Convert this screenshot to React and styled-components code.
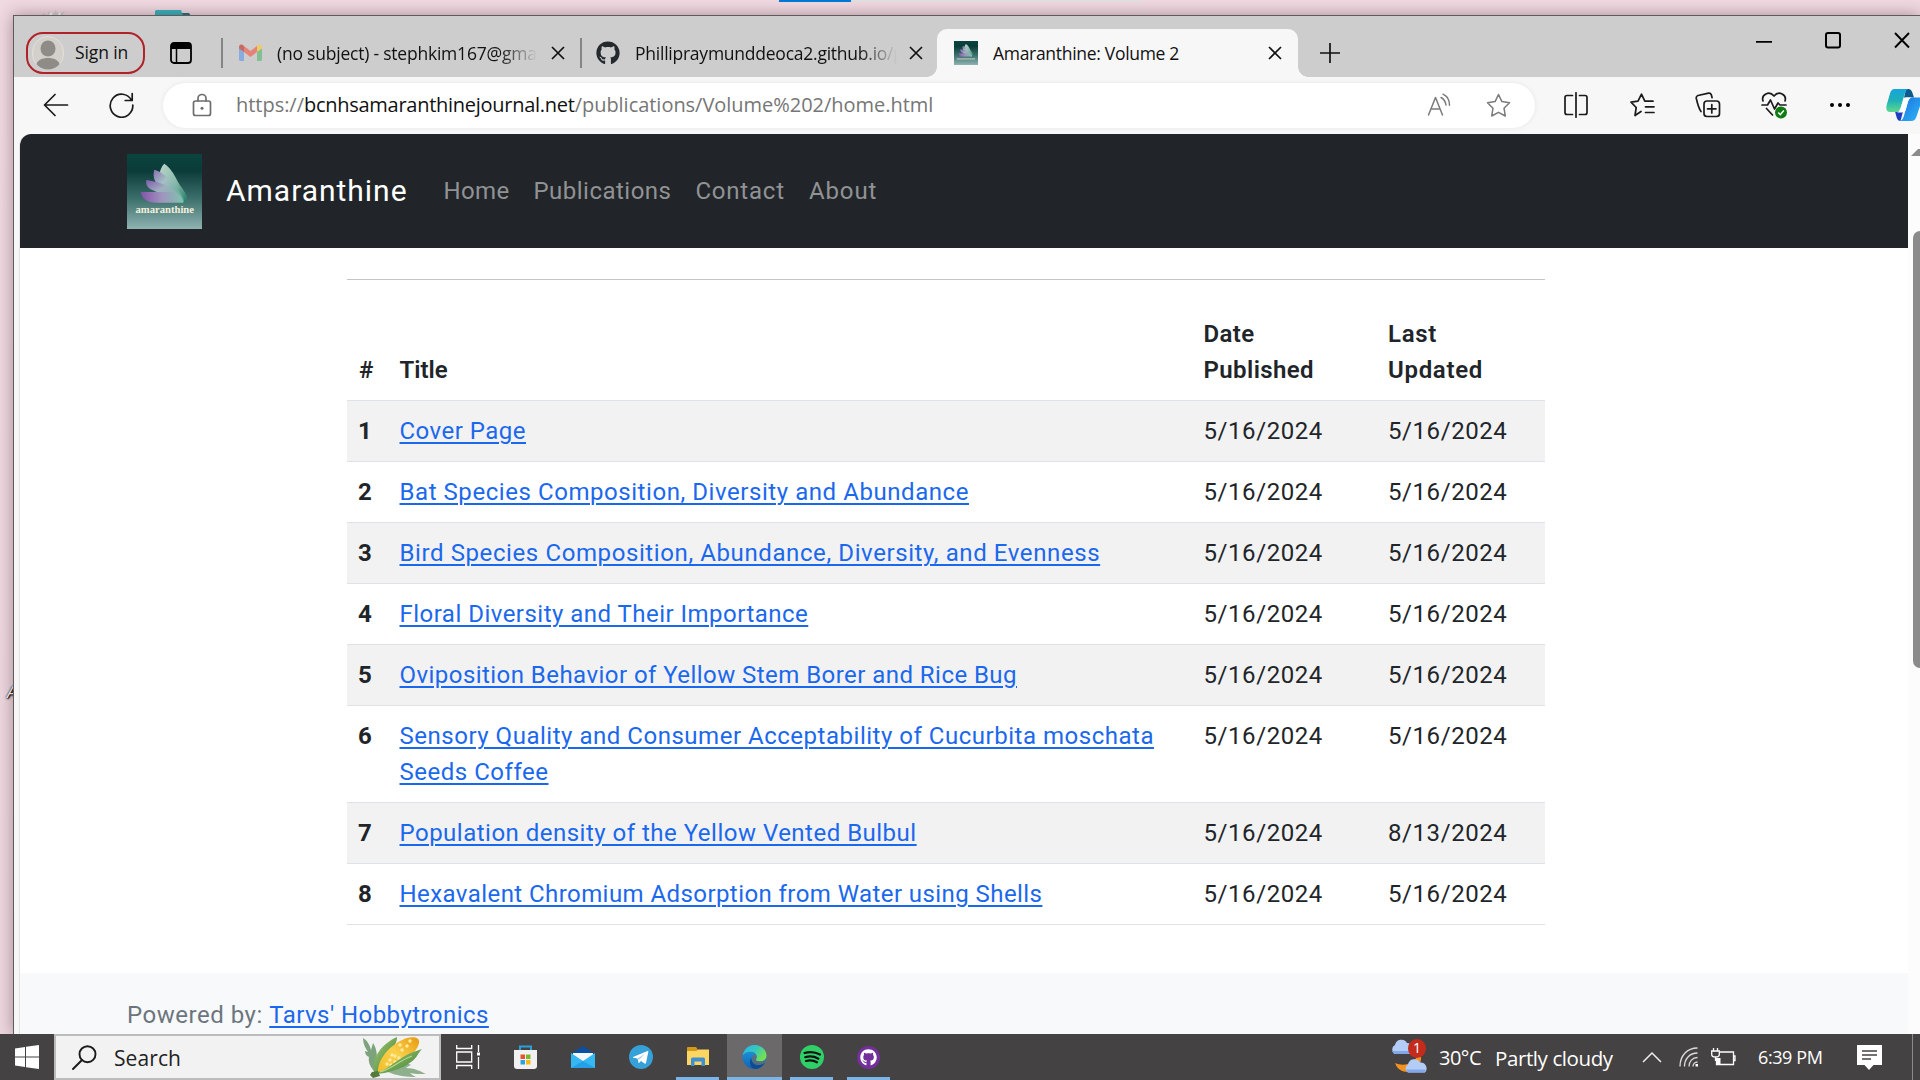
import React from 'react';
import styled, { createGlobalStyle, css } from 'styled-components';
import { FaGithub } from 'react-icons/fa';

const Global = createGlobalStyle`
  *, *::before, *::after { box-sizing: border-box; }
  body { margin: 0; overflow: hidden; background: #efd8e0; }
  svg { display: block; flex: none; }
`;

const ui = css`font-family: "Open Sans", "Noto Sans", sans-serif;`;
const web = css`font-family: Roboto, "Liberation Sans", sans-serif;`;

/* ---------- desktop ---------- */
const Desktop = styled.div`
  position: relative;
  width: 1920px;
  height: 1080px;
  overflow: hidden;
  display: flex;
  flex-direction: column;
  background: linear-gradient(#f0d9e1, #edd7df);
`;
const Behind = styled.div`
  position: absolute;
  left: ${p => p.$x}px;
  top: ${p => p.$y}px;
`;
const TopStrip = styled.div`
  display: flex;
  width: 363px;
  height: 2px;
  background: #e2e0e2;
  &::before { content: ''; width: 72px; background: #0078d7; }
`;
const IconLabel = styled.span`
  ${ui}
  font-size: 17px;
  font-style: italic;
  line-height: 20px;
  color: #fff;
  text-shadow: 1px 1px 2px #000, 0 0 2px #000, 1px 0 1px #000;
`;

/* ---------- browser window ---------- */
const Window = styled.div`
  position: relative;
  flex: 1;
  min-height: 0;
  margin: 15px 0 0 13px;
  display: flex;
  flex-direction: column;
  border-left: 1px solid #5f5b5d;
  border-top: 1px solid #5f5b5d;
  background: #f7f7f7;
  box-shadow: 0 0 15px rgba(60, 30, 40, 0.42);
`;
const TitleBar = styled.div`
  ${ui}
  display: flex;
  align-items: flex-start;
  height: 61px;
  padding-left: 12px;
  background: #cdcdcd;
  color: #111;
`;
const TitleItem = styled.div`
  display: flex;
  align-items: center;
  height: 41px;
  margin-top: 16px;
  margin-left: ${p => p.$ml || 0}px;
`;
const SignIn = styled.div`
  display: flex;
  align-items: center;
  gap: 11px;
  width: 119px;
  height: 42px;
  margin-top: 16px;
  padding-left: 4px;
  border: 2px solid #b02228;
  border-radius: 17px;
  font-size: 17.5px;
  letter-spacing: -0.1px;
  line-height: 34px;
`;
const SignInText = styled.span`
  padding-bottom: 2px;
`;
const Divider = styled.div`
  width: 2px;
  height: 30px;
  background: #858585;
`;
const TabTitle = styled.span`
  width: ${p => p.$w}px;
  overflow: hidden;
  white-space: nowrap;
  font-size: 17.5px;
  line-height: 28px;
  letter-spacing: ${p => p.$ls}px;
  ${p => p.$fade && css`mask-image: linear-gradient(90deg, #000 calc(100% - 38px), transparent);`}
`;
const ActiveTab = styled.div`
  position: relative;
  display: flex;
  align-items: center;
  width: 361px;
  height: 48px;
  margin-top: 13px;
  margin-left: 14px;
  padding: 0 16px 1px 17px;
  border-radius: 10px 10px 0 0;
  background: #f7f7f7;
  &::before, &::after {
    content: '';
    position: absolute;
    bottom: 0;
    width: 10px;
    height: 10px;
  }
  &::before { left: -10px; background: radial-gradient(circle at 0 0, #cdcdcd 9.5px, #f7f7f7 10px); }
  &::after { right: -10px; background: radial-gradient(circle at 100% 0, #cdcdcd 9.5px, #f7f7f7 10px); }
`;
const ActiveTitle = styled(TabTitle)`
  flex: 1;
  margin-left: 15px;
`;

const Toolbar = styled.div`
  ${ui}
  display: flex;
  align-items: center;
  height: 57px;
  padding: 0 0 1px 29px;
  background: #f7f7f7;
`;
const Address = styled.div`
  display: flex;
  align-items: center;
  width: 1372px;
  height: 45px;
  margin: 0 28px 0 29px;
  padding: 0 24px 0 29px;
  border-radius: 23px;
  background: #fff;
  box-shadow: 0 0 5px rgba(0, 0, 0, 0.07);
`;
const Url = styled.div`
  flex: 1;
  margin-left: 24px;
  font-size: 20px;
  line-height: 30px;
  white-space: nowrap;
  color: #767676;
  letter-spacing: -0.03px;
`;
const Host = styled.span`
  color: #111;
  letter-spacing: -0.27px;
`;
const ToolIcons = styled.div`
  display: flex;
  align-items: center;
  gap: ${p => p.$gap || 40}px;
`;

const Viewport = styled.div`
  flex: 1;
  min-height: 0;
  display: flex;
  margin-left: 5px;
  border-left: 1px solid #e3e3e3;
  border-top-left-radius: 12px;
  background: #fff;
  overflow: hidden;
`;
const Page = styled.div`
  ${web}
  width: 1888px;
  display: flex;
  flex-direction: column;
  font-size: 24px;
  line-height: 36px;
  color: #212529;
`;
const Scrollbar = styled.div`
  flex: 1;
  display: flex;
  flex-direction: column;
  background: #fcfcfc;
  padding: 15px 0 0 3px;
  overflow: hidden;
`;
const Thumb = styled.div`
  width: 14px;
  height: 437px;
  margin: 75px 0 0 2px;
  border-radius: 7px;
  background: #8b8b8b;
`;

/* ---------- site ---------- */
const Navbar = styled.nav`
  display: flex;
  align-items: center;
  height: 114px;
  padding-left: 107px;
  background: #212529;
`;
const Brand = styled.a`
  width: 217.5px;
  margin-left: 24px;
  font-size: 30px;
  letter-spacing: 0.98px;
  color: #fff;
`;
const NavLink = styled.a`
  margin-right: 24px;
  color: #909294;
  letter-spacing: ${p => p.$ls}px;
`;
const Main = styled.main`
  width: 1198px;
  margin-left: 327px;
  padding-top: 31px;
  height: 725px;
`;
const Rule = styled.hr`
  height: 1px;
  margin: 0 0 24px;
  border: 0;
  background: #c4c5c7;
`;
const Table = styled.table`
  width: 100%;
  table-layout: fixed;
  border-collapse: separate;
  border-spacing: 0;
`;
const Col = styled.col`width: ${p => p.$w}px;`;
const Th = styled.th`
  padding: 12px;
  border-bottom: 1px solid #dee2e6;
  text-align: left;
  vertical-align: bottom;
  font-weight: 600;
  letter-spacing: ${p => p.$ls || 0}px;
`;
const Row = styled.tr`
  background: ${p => (p.$odd ? '#f2f2f2' : '#fff')};
`;
const Td = styled.td`
  padding: 12px;
  border-bottom: 1px solid #dee2e6;
  vertical-align: top;
  letter-spacing: 0.58px;
`;
const Num = styled(Td)`
  padding-left: 11px;
  font-weight: 700;
`;
const Link = styled.a`
  color: #1a68ee;
  text-decoration: underline;
  text-decoration-thickness: 2px;
  text-underline-offset: 3px;
  letter-spacing: ${p => p.$ls}px;
`;
const Footer = styled.footer`
  flex: 1;
  padding: 24px 0 0 107px;
  background: #f8f9fa;
  color: #6c757d;
  letter-spacing: 0.52px;
  white-space: nowrap;
`;

/* ---------- taskbar ---------- */
const Taskbar = styled.div`
  ${ui}
  position: relative;
  display: flex;
  height: 46px;
  background: #444242;
  color: #fff;
`;
const Start = styled.div`
  display: flex;
  align-items: center;
  width: 54px;
  padding-left: 15px;
`;
const SearchBox = styled.div`
  display: flex;
  align-items: center;
  width: 387px;
  height: 46px;
  padding-left: 16px;
  border: 2px solid #bdbcbc;
  background: #f2f2f2;
  color: #222;
  font-size: 21px;
`;
const SearchText = styled.span`
  width: 248px;
  margin-left: 17px;
  padding-top: 2px;
  line-height: 28px;
  letter-spacing: 0.1px;
`;
const TaskButton = styled.div`
  display: flex;
  align-items: center;
  justify-content: center;
  width: ${p => p.$w || 43}px;
  margin-left: ${p => p.$ml}px;
  background: ${p => (p.$active ? '#6b6969' : 'transparent')};
  border-bottom: ${p => (p.$open ? '3px solid #7cb4e8' : '0')};
  padding-top: ${p => (p.$open ? 3 : 0)}px;
`;
const Tray = styled.div`
  flex: 1;
  display: flex;
  align-items: center;
  padding-left: 500px;
  white-space: nowrap;
`;
const WeatherIcon = styled.div`
  position: relative;
  width: 37px;
  height: 46px;
`;
const Badge = styled.span`
  position: absolute;
  left: 18px;
  top: 5px;
  width: 18px;
  height: 19px;
  border-radius: 50%;
  background: #c42b1c;
  font-size: 14px;
  line-height: 18px;
  text-align: center;
`;
const TrayText = styled.span`
  width: ${p => p.$w}px;
  margin-left: ${p => p.$ml}px;
  padding-top: ${p => p.$pt || 0}px;
  font-size: ${p => p.$size}px;
  line-height: 28px;
  letter-spacing: ${p => p.$ls}px;
`;
const Spaced = styled.div`
  margin-left: ${p => p.$ml}px;
`;
const ShowDesktop = styled.div`
  width: 1px;
  height: 46px;
  margin-left: 30px;
  background: #8c8b8b;
`;

/* ---------- drawings ---------- */
const line = { fill: 'none', stroke: '#1b1b1b', strokeWidth: 1.7, strokeLinecap: 'round', strokeLinejoin: 'round' };

const Logo = ({ size, small }) => (
  <svg width={size} height={size} viewBox="0 0 75 75">
    <defs>
      <linearGradient id="lbg" x1="0" y1="0" x2="0" y2="1">
        <stop offset="0" stopColor="#0b443f" /><stop offset=".22" stopColor="#0a3b38" />
        <stop offset=".6" stopColor="#3d706c" /><stop offset="1" stopColor="#8fb3b1" />
      </linearGradient>
      <linearGradient id="p1" x1="0" y1="0" x2="1" y2="0"><stop offset="0" stopColor="#8452a8" /><stop offset=".5" stopColor="#9f94bd" /><stop offset="1" stopColor="#7ec4ad" /></linearGradient>
      <linearGradient id="p2" x1="0" y1="0" x2="1" y2="1"><stop offset="0" stopColor="#8259ab" /><stop offset=".4" stopColor="#9fb0c0" /><stop offset="1" stopColor="#6bb59c" /></linearGradient>
      <linearGradient id="p3" x1="0" y1="0" x2="1" y2="1"><stop offset="0" stopColor="#8a6fb3" /><stop offset=".35" stopColor="#a5c0c4" /><stop offset="1" stopColor="#4fa18c" /></linearGradient>
      <linearGradient id="p4" x1="0" y1="0" x2="1" y2="1"><stop offset="0" stopColor="#bcd5cd" /><stop offset=".55" stopColor="#86b8a8" /><stop offset="1" stopColor="#1f7a69" /></linearGradient>
    </defs>
    <rect width="75" height="75" fill="url(#lbg)" />
    <path d="M37.300 9.700C43 13 47 20 51 28c4 7 9 11 9 17 0 2-1.500 4-4 4C50 38 37 32 33 24c-1-6 1-11 4.300-14.300Z" fill="url(#p4)" />
    <path d="M27.300 15.700C33 17 41 23 47 31c5 6 10 11 10 17-9-6-24-14-29-21-1.800-4-1.600-8-.700-11.300Z" fill="url(#p3)" />
    <path d="M19.300 26c8 1 19 4 26 9 7 4 12 9 11 14-9-5-23-9-31-13-5-2-7-6-6-10Z" fill="url(#p2)" />
    <path d="M13.700 38H42c8 0 13 4 14 10.700H28c-8 0-13-4-14.300-10.700Z" fill="url(#p1)" />
    {small
      ? <path d="M9 56h57" stroke="#c9d3c6" strokeWidth="5" opacity=".6" />
      : <text x="8.500" y="58.500" textLength="58.500" lengthAdjust="spacingAndGlyphs" fontFamily="Liberation Serif, serif" fontWeight="700" fontSize="11" fill="#f3f1de">amaranthine</text>}
  </svg>
);
const Avatar = () => (
  <svg width="32" height="34" viewBox="0 0 32 34">
    <ellipse cx="16" cy="17" rx="15.500" ry="16.500" fill="#d3cfcb" stroke="#e3e0dc" />
    <ellipse cx="16" cy="12.500" rx="7.500" ry="8" fill="#8f8c88" />
    <path d="M4.500 28C6 24 10 22 16 22s10 2 11.500 6C24.500 32 20 33.500 16 33.500S7.500 32 4.500 28Z" fill="#8f8c88" />
  </svg>
);
const TabsIcon = () => (
  <svg width="22" height="22" viewBox="0 0 22 22">
    <rect x="1" y="1" width="20" height="20" rx="3" fill="none" stroke="#000" strokeWidth="1.800" />
    <path d="M1 7V4a3 3 0 0 1 3-3h14a3 3 0 0 1 3 3v3Z" fill="#000" /><path d="M6.500 6v15" stroke="#000" strokeWidth="1.500" />
  </svg>
);
const Gmail = () => (
  <svg width="23" height="17" viewBox="0 0 23 17">
    <path d="M0 3v12.500Q0 17 1.500 17H5V6Z" fill="#87acdf" /><path d="M23 3v12.500q0 1.500-1.500 1.500H18V6Z" fill="#82c093" />
    <path d="M18 2v6l5-3.500V3c0-3-3-3.500-5-1Z" fill="#eccb68" /><path d="M5 2v6L0 4.500V3c0-3 3-3.500 5-1Z" fill="#c66a64" />
    <path d="M5 2l6.500 5L18 2v6l-6.500 5L5 8Z" fill="#e58379" />
  </svg>
);
const Cross = ({ s = 14, w = 1.7 }) => (
  <svg width={s} height={s} viewBox="0 0 14 14"><path d="M1 1l12 12M13 1L1 13" stroke="#111" strokeWidth={w} fill="none" /></svg>
);
const star = 'M12.500 1.500l3.400 7.100 7.600 1.100-5.500 5.500 1.300 7.800-6.800-3.700L5.700 23 7 15.200 1.500 9.700l7.600-1.100Z';
const Copilot = () => (
  <svg width="34" height="34" viewBox="0 0 34 34">
    <defs>
      <linearGradient id="c1" x1="0" y1="0" x2="0" y2="1"><stop offset="0" stopColor="#15a5dc" /><stop offset=".5" stopColor="#1fb0b8" /><stop offset="1" stopColor="#5fd98d" /></linearGradient>
      <linearGradient id="c2" x1="0" y1="0" x2="1" y2="1"><stop offset="0" stopColor="#1d6fe0" /><stop offset="1" stopColor="#2ab4f5" /></linearGradient>
    </defs>
    <path d="M20 1h2.500c2 0 3 1.300 3.800 3.500L28 9.500H18Z" fill="#0b5a8e" />
    <path d="M9 23.500h8L14.500 33c-2 0-3.300-1.500-4-4Z" fill="#1b3fc0" />
    <path d="M8.500 1H23c-2.500 0-3.500 2-4.500 5.500L15 18.500C14 22 13 24 9.500 24H4c-4 0-4.200-4-3.200-7.500L4 5.500C5 2.500 6 1 8.500 1Z" fill="url(#c1)" />
    <path d="M34 9.500h-7.500c-3 0-4 2-5 5.500L18.500 26c-1.200 4.500-2.500 7-5.500 7H25c3 0 4.500-1.500 5.500-4.500L34 18Z" fill="url(#c2)" />
    <path d="M20.500 9.500H26c-2.300.3-3.300 2-4.200 5l-1.800 6.500c-.8 2.600-2 3.500-4 3.500h-5c2.300-.5 3.300-2.500 4-5l1.800-6.500c.6-2 1.700-3.500 3.700-3.500Z" fill="#fff" />
  </svg>
);
const Corn = () => (
  <svg width="66" height="42" viewBox="0 0 66 42">
    <defs>
      <linearGradient id="k" x1="0" y1="1" x2="1" y2="0"><stop offset="0" stopColor="#f3bd2c" /><stop offset=".5" stopColor="#f9d04a" /><stop offset="1" stopColor="#e79a10" /></linearGradient>
      <linearGradient id="lf" x1="0" y1="0" x2="1" y2="1"><stop offset="0" stopColor="#a5cc74" /><stop offset="1" stopColor="#3f8038" /></linearGradient>
    </defs>
    <path d="M1 2c5 3 7 8 8 12l2-7c4 6 4 12 4 18l-3 10C8 30 6 26 7 21c-3-1-4-4-4-6l3 1C3 12 1 7 1 2Z" fill="#7da37c" />
    <path d="M27 33c8-5 16-7 22-4-2 1-4 2-5 3 8 0 14 3 20 6-8 0-12 0-16-1 2 2 4 3 6 4-8 0-20-1-28-5Z" fill="#8fb08d" />
    <path d="M12 36C10 20 20 8 35 1c0 6-3 10-8 16S18 30 18 37Z" fill="url(#lf)" />
    <path d="M16 33c2-14 16-27 29-31 6-1.500 13-1 12 5-2 12-24 25-41 29Z" fill="url(#k)" />
    {[[28, 24], [33, 20], [30, 19], [37, 22], [25, 28], [33, 26], [40, 14], [45, 10], [38, 9], [48, 5], [29, 29]].map(([x, y]) => <circle key={x + '-' + y} cx={x} cy={y} r="1.700" fill="#ffeaa0" />)}
    <path d="M14 37C28 34 35 20 60 13c-4 4-5 9-11 13-9 7-22 11-35 12Z" fill="url(#lf)" />
    <path d="M10 36l6-1 2 5-7 2-3-3Z" fill="#55783b" />
    <path d="M18 36c12-3 20-12 32-16" stroke="#b7d98b" strokeWidth="1.200" fill="none" />
  </svg>
);
const Weather = () => (
  <svg width="37" height="46" viewBox="0 0 37 46">
    <path d="M31 22c1 9-5 16-13 16-6 0-11-3-13-9 9 4 20 1 23-9Z" fill="#f3941f" />
    <path d="M5 20a5 5 0 0 1 0-9 6.500 6.500 0 0 1 12-2 6 6 0 0 1 3 11Z" fill="#b4cdf6" /><path d="M2 17h19l-2 3H4Z" fill="#83a8ea" />
    <path d="M18 38.500a4.500 4.500 0 0 1 0-8 6.500 6.500 0 0 1 12-2 6 6 0 0 1 5 10Z" fill="#b4cdf6" /><path d="M15.500 35.500H36l-1.500 3H18Z" fill="#83a8ea" />
  </svg>
);

const papers = [
  ['Cover Page', 0.48], ['Bat Species Composition, Diversity and Abundance', 0.56],
  ['Bird Species Composition, Abundance, Diversity, and Evenness', 0.6], ['Floral Diversity and Their Importance', 0.48],
  ['Oviposition Behavior of Yellow Stem Borer and Rice Bug', 0.45], ['Sensory Quality and Consumer Acceptability of Cucurbita moschata Seeds Coffee', 0.52],
  ['Population density of the Yellow Vented Bulbul', 0.49, '8/13/2024'], ['Hexavalent Chromium Adsorption from Water using Shells', 0.43],
];

export default function App() {
  return (
    <Desktop>
      <Global />
      <Behind $x={779} $y={0}><TopStrip /></Behind>
      <Behind $x={40} $y={10}>
        <svg width="26" height="6"><path d="M0 6l4-3 3 3 2-5 4 4 2-5 4 4 6-3-3 5Z" fill="#d3cfd2" /><path d="M8 6l3-4 2 4ZM17 6l3-4 1 4Z" fill="#fff" /></svg>
      </Behind>
      <Behind $x={155} $y={10}>
        <svg width="36" height="6"><path d="M26 3h8l2 3H20Z" fill="#1d7480" /><path d="M1 0h25l2 6H0V1Z" fill="#35b5be" /></svg>
      </Behind>
      <Behind $x={7} $y={682}><IconLabel>A</IconLabel></Behind>
      <Window>
        <TitleBar>
          <SignIn><Avatar /><SignInText>Sign in</SignInText></SignIn>
          <TitleItem $ml={25}><TabsIcon /></TitleItem>
          <TitleItem $ml={29}><Divider /></TitleItem>
          <TitleItem $ml={16}><Gmail /></TitleItem>
          <TitleItem $ml={15}><TabTitle $w={260} $ls={-0.22} $fade>(no subject) - stephkim167@gmail.com</TabTitle></TitleItem>
          <TitleItem $ml={14}><Cross /></TitleItem>
          <TitleItem $ml={15}><Divider /></TitleItem>
          <TitleItem $ml={14}><FaGithub size={24} color="#24292e" /></TitleItem>
          <TitleItem $ml={15}><TabTitle $w={262} $ls={-0.24} $fade>Phillipraymunddeoca2.github.io/publications</TabTitle></TitleItem>
          <TitleItem $ml={12}><Cross /></TitleItem>
          <ActiveTab>
            <Logo size={24} small />
            <ActiveTitle $ls={-0.3}>Amaranthine: Volume 2</ActiveTitle>
            <Cross />
          </ActiveTab>
          <TitleItem $ml={21}>
            <svg width="22" height="22" viewBox="0 0 22 22"><path d="M11 1v20M1 11h20" stroke="#111" strokeWidth="1.700" /></svg>
          </TitleItem>
          <TitleItem $ml={415}>
            <svg width="16" height="24" viewBox="0 0 16 24"><path d="M0 .5h16" stroke="#000" strokeWidth="2.500" /></svg>
          </TitleItem>
          <TitleItem $ml={53}>
            <svg width="16" height="42" viewBox="0 0 16 42"><rect x="1" y="1" width="14" height="14.500" rx="2" fill="none" stroke="#000" strokeWidth="2" /></svg>
          </TitleItem>
          <TitleItem $ml={53}>
            <svg width="16" height="42" viewBox="0 0 16 42"><path d="M1 1l14 14.500M15 1L1 15.500" stroke="#000" strokeWidth="1.900" /></svg>
          </TitleItem>
        </TitleBar>

        <Toolbar>
          <svg width="26" height="24" viewBox="0 0 26 24"><path d="M24.500 12H2M12 1.500L1.500 12 12 22.500" {...line} /></svg>
          <Spaced $ml={40}>
            <svg width="25" height="26" viewBox="0 0 25 26"><path d="M22.500 8.300A11.300 11.500 0 1 0 23.800 13M23.200 1.500v7h-7" {...line} /></svg>
          </Spaced>
          <Address>
            <svg width="20" height="24" viewBox="0 0 20 24"><g {...line} stroke="#6d6d6d"><rect x="1.500" y="8" width="17" height="14.500" rx="2" /><path d="M6 8V5.500a4 4 0 0 1 8 0V8" /></g><circle cx="10" cy="15.200" r="1.500" fill="#6d6d6d" /></svg>
            <Url>https://<Host>bcnhsamaranthinejournal.net</Host>/publications/Volume%202/home.html</Url>
            <ToolIcons $gap={35}>
              <svg width="24" height="24" viewBox="0 0 24 24"><g {...line} stroke="#7b7b7b" strokeWidth="1.500"><path d="M1.500 22L8.500 4.500 15.500 22M4 16h9M14 4.500c3 1.500 4.500 4 5 7.500M16 1.200c4 2 6.500 6 6.500 11" /></g></svg>
              <svg width="25" height="25" viewBox="0 0 25 25"><path d={star} {...line} stroke="#7b7b7b" strokeWidth="1.500" /></svg>
            </ToolIcons>
          </Address>
          <ToolIcons>
            <svg width="26" height="26" viewBox="0 0 26 26"><path d="M9.500 3.500H4a2 2 0 0 0-2 2v15a2 2 0 0 0 2 2h5.500M16.500 3.500H22a2 2 0 0 1 2 2v15a2 2 0 0 1-2 2h-5.500M13 .8v24.400" {...line} /></svg>
            <svg width="26" height="26" viewBox="0 0 26 26"><path d="M12 19.500l-6 4 1.200-8L2 10.200l7-1 3.500-7 3.300 7H24M16.500 14.800H25M16.500 20.500H25" {...line} /></svg>
            <svg width="26" height="26" viewBox="0 0 26 26"><rect x="9" y="9" width="15.500" height="15.500" rx="3" {...line} /><path d="M16.800 12.500v8.500M12.500 16.800H21M6 19.500C4 17 2 9.500 1.300 6.500 1 5 1.500 4 3 3.500l10.500-2.300c1.500-.2 2.300.3 2.800 1.500l.8 3" {...line} /></svg>
            <svg width="26" height="28" viewBox="0 0 26 28"><path d="M2 10C0 4 8-1 13 5c5-6 13-1 11 5M1 14h5.500l3-5 4 9 3.500-6 2 2h6M5.500 17.500l6 6.500" {...line} /><circle cx="20" cy="21.500" r="6" fill="#0f7b12" /><path d="M17.300 21.500l2 2.200 3.500-4.200" stroke="#fff" strokeWidth="1.500" fill="none" /></svg>
            <svg width="26" height="6" viewBox="0 0 26 6"><circle cx="5" cy="3" r="2" /><circle cx="13" cy="3" r="2" /><circle cx="21" cy="3" r="2" /></svg>
            <Spaced $ml={-7}><Copilot /></Spaced>
          </ToolIcons>
        </Toolbar>

        <Viewport>
          <Page>
            <Navbar>
              <Logo size={75} />
              <Brand>Amaranthine</Brand>
              <NavLink $ls={0.35}>Home</NavLink>
              <NavLink $ls={0.48}>Publications</NavLink>
              <NavLink $ls={0.8}>Contact</NavLink>
              <NavLink $ls={0.9}>About</NavLink>
            </Navbar>
            <Main>
              <Rule />
              <Table>
                <colgroup><Col $w={40.5} /><Col $w={804} /><Col $w={184.5} /><Col /></colgroup>
                <thead>
                  <tr><Th>#</Th><Th>Title</Th><Th $ls={0.4}>Date<br />Published</Th><Th $ls={0.7}>Last<br />Updated</Th></tr>
                </thead>
                <tbody>
                  {papers.map(([title, ls, updated = '5/16/2024'], i) => (
                    <Row key={title} $odd={i % 2 === 0}>
                      <Num>{i + 1}</Num>
                      <Td><Link $ls={ls}>{title}</Link></Td>
                      <Td>5/16/2024</Td>
                      <Td>{updated}</Td>
                    </Row>
                  ))}
                </tbody>
              </Table>
            </Main>
            <Footer>Powered by: <Link $ls={0.45}>Tarvs' Hobbytronics</Link></Footer>
          </Page>
          <Scrollbar>
            <svg width="18" height="7" viewBox="0 0 18 7"><path d="M0 7L8.500-1.500 17 7Z" fill="#8b8b8b" /></svg>
            <Thumb />
          </Scrollbar>
        </Viewport>
      </Window>

      <Taskbar>
        <Start>
          <svg width="24" height="24" viewBox="0 0 24 24"><path d="M0 3.400L10 2v9.500H0ZM11 1.800L24 0v11.500H11ZM0 12.500h10V22L0 20.600ZM11 12.500h13V24l-13-1.800Z" fill="#fff" /></svg>
        </Start>
        <SearchBox>
          <svg width="25" height="25" viewBox="0 0 25 25"><circle cx="15.500" cy="9.200" r="8" {...line} strokeWidth="1.900" /><path d="M10 15L1 24" {...line} strokeWidth="1.900" /></svg>
          <SearchText>Search</SearchText>
          <Corn />
        </SearchBox>
        <TaskButton $ml={5}>
          <svg width="24" height="24" viewBox="0 0 24 24"><path d="M.7 0v3.500h15V0M.7 7h15v10H.7ZM.7 24v-3.500h15V24M22.500 0v7M22.500 12v12" fill="none" stroke="#fff" strokeWidth="1.300" /><rect x="21" y="7.500" width="3" height="3" fill="#fff" /></svg>
        </TaskButton>
        <TaskButton $ml={15}>
          <svg width="23" height="24" viewBox="0 0 23 24"><path d="M6 6V1.500h11V6" fill="none" stroke="#29a0dc" strokeWidth="2" /><path d="M0 5h23v16q0 3-3 3H3q-3 0-3-3Z" fill="#f1f1f1" /><path d="M6.500 9.500h4.500v4.500H6.500Z" fill="#e8532a" /><path d="M12 9.500h4.500v4.500H12Z" fill="#7cb82f" /><path d="M6.500 15h4.500v4.500H6.500Z" fill="#2ba2e0" /><path d="M12 15h4.500v4.500H12Z" fill="#f5b81f" /></svg>
        </TaskButton>
        <TaskButton $ml={14}>
          <svg width="24" height="23" viewBox="0 0 24 23"><path d="M0 8L12 0l12 8v3H0Z" fill="#0a50a0" /><path d="M2 7h20v10H2Z" fill="#f4f8fb" /><path d="M0 7l12 8L24 7v15H0Z" fill="#35b8f1" /><path d="M12 15l12 7H0Z" fill="#1a8bdc" opacity=".55" /></svg>
        </TaskButton>
        <TaskButton $ml={15}>
          <svg width="24" height="24" viewBox="0 0 24 24"><circle cx="12" cy="12" r="12" fill="#36a0d8" /><path d="M4 12L18.500 6c.7-.2 1 .2.800 1l-2.300 11c-.2.800-.7 1-1.400.6l-3.600-2.700-1.700 1.800c-.5.400-.8.200-.9-.4L8.600 13.600 4.300 12.700c-.6-.2-.6-.5-.3-.7Z" fill="#fff" /><path d="M8.600 13.600L16 8.700l-5.800 6Z" fill="#a9cfe5" /></svg>
        </TaskButton>
        <TaskButton $ml={14} $open>
          <svg width="22" height="20" viewBox="0 0 22 20"><path d="M0 1q0-1 1-1h8l2 3v5H0Z" fill="#d39a17" /><path d="M0 4h9.500L11 2.500H22V18H0Z" fill="#fbd663" /><path d="M4 19v-7q0-1.500 1.500-1.500h11Q18 10.500 18 12v7h-3.500v-4.500h-7V19Z" fill="#3f8fd1" /></svg>
        </TaskButton>
        <TaskButton $ml={8} $w={55} $open $active>
          <svg width="25" height="24" viewBox="0 0 25 24">
            <defs>
              <linearGradient id="e1" x1="0" y1="0" x2="1" y2=".6"><stop offset="0" stopColor="#2bb4e6" /><stop offset=".5" stopColor="#36c6c0" /><stop offset="1" stopColor="#76e24b" /></linearGradient>
              <linearGradient id="e2" x1="0" y1="0" x2="0" y2="1"><stop offset="0" stopColor="#1f9fe3" /><stop offset="1" stopColor="#1263b5" /></linearGradient>
            </defs>
            <circle cx="12.500" cy="12" r="12" fill="url(#e2)" />
            <path d="M1 10C2 4 7 0 12.500 0c7 0 12 5 12 10.500 0 4-3 6-6.500 6-3 0-4.500-1-4-2.200 1.500-2 1-6-3-7.300C7 6 3 7 1 10Z" fill="url(#e1)" />
            <path d="M9.500 12.500C9 17 12 20 16 20c3 0 5-1 6.800-2.300C20.500 22 17 24 13 24 8 23 6.500 17 9.500 12.500Z" fill="#0d4c95" />
            <path d="M14 14.300c-.5 1.200 1 2.200 4 2.200 2.500 0 4.500-1 5.600-2.500-.1 1.500-.4 2.500-.8 3.700C21 19 19 20 16 20c-4 0-7-3.500-6-8 1-2.500 3-3 4-2 1 1.500.8 3 0 4.300Z" fill="#6b6969" opacity=".75" />
          </svg>
        </TaskButton>
        <TaskButton $ml={8} $open>
          <svg width="24" height="24" viewBox="0 0 24 24"><circle cx="12" cy="12" r="12" fill="#2ed168" /><path d="M4.500 8c5-1.500 11-1 15.500 1.500M5.200 12.200c4.500-1.300 9.300-.8 13.200 1.500M6 16c3.800-1 7.600-.6 11 1.300" fill="none" stroke="#111" strokeWidth="2.200" strokeLinecap="round" /></svg>
        </TaskButton>
        <TaskButton $ml={14} $open>
          <svg width="23" height="23" viewBox="0 0 23 23"><circle cx="11.500" cy="11.500" r="11.500" fill="#74309a" /><g transform="translate(3 3)"><FaGithub size={17} color="#fff" /></g></svg>
        </TaskButton>
        <Tray>
          <WeatherIcon><Weather /><Badge>1</Badge></WeatherIcon>
          <TrayText $ml={12} $w={56} $size={20} $ls={-0.5} $pt={2}>30°C</TrayText>
          <TrayText $ml={0} $w={118} $size={20.5} $ls={-0.4} $pt={2}>Partly cloudy</TrayText>
          <Spaced $ml={29}><svg width="20" height="12" viewBox="0 0 20 12"><path d="M1 11L10 2l9 9" fill="none" stroke="#eee" strokeWidth="1.500" /></svg></Spaced>
          <Spaced $ml={17}>
            <svg width="20" height="20" viewBox="0 0 20 20"><g fill="none" stroke="#ddd" strokeWidth="1.300"><path d="M1 19.500C1 9 8 1 18.500 1M5.500 19.500C5.500 12 10.500 6 18.500 6M10 19.500c0-5 3.500-9 8.500-9M14 19.500c0-2.500 2-4.500 4.500-4.500" /></g><rect x="16.500" y="17" width="2.500" height="2.500" fill="#fff" /></svg>
          </Spaced>
          <Spaced $ml={12}>
            <svg width="25" height="18" viewBox="0 0 25 18"><g fill="none" stroke="#fff" strokeWidth="1.300"><path d="M9 4h13.500v12.500h-17V10M22.500 8h1.500v4.500h-1.500M2.500 0v3M6.500 0v3M.7 3h7.600v3.500q0 2.500-3.800 2.500T.7 6.500ZM4.500 9v4" /></g><path d="M6 10h3.500v6H6Z" fill="#fff" /></svg>
          </Spaced>
          <TrayText $ml={22} $w={66} $size={18} $ls={-0.4}>6:39 PM</TrayText>
          <Spaced $ml={33}>
            <svg width="25" height="25" viewBox="0 0 25 25"><path d="M0 0h25v20h-8.500L12 25l-4.500-5H0Z" fill="#fff" /><path d="M5 6h15M5 10h15M5 14h9" stroke="#444242" strokeWidth="1.300" /></svg>
          </Spaced>
          <ShowDesktop />
        </Tray>
      </Taskbar>
    </Desktop>
  );
}
